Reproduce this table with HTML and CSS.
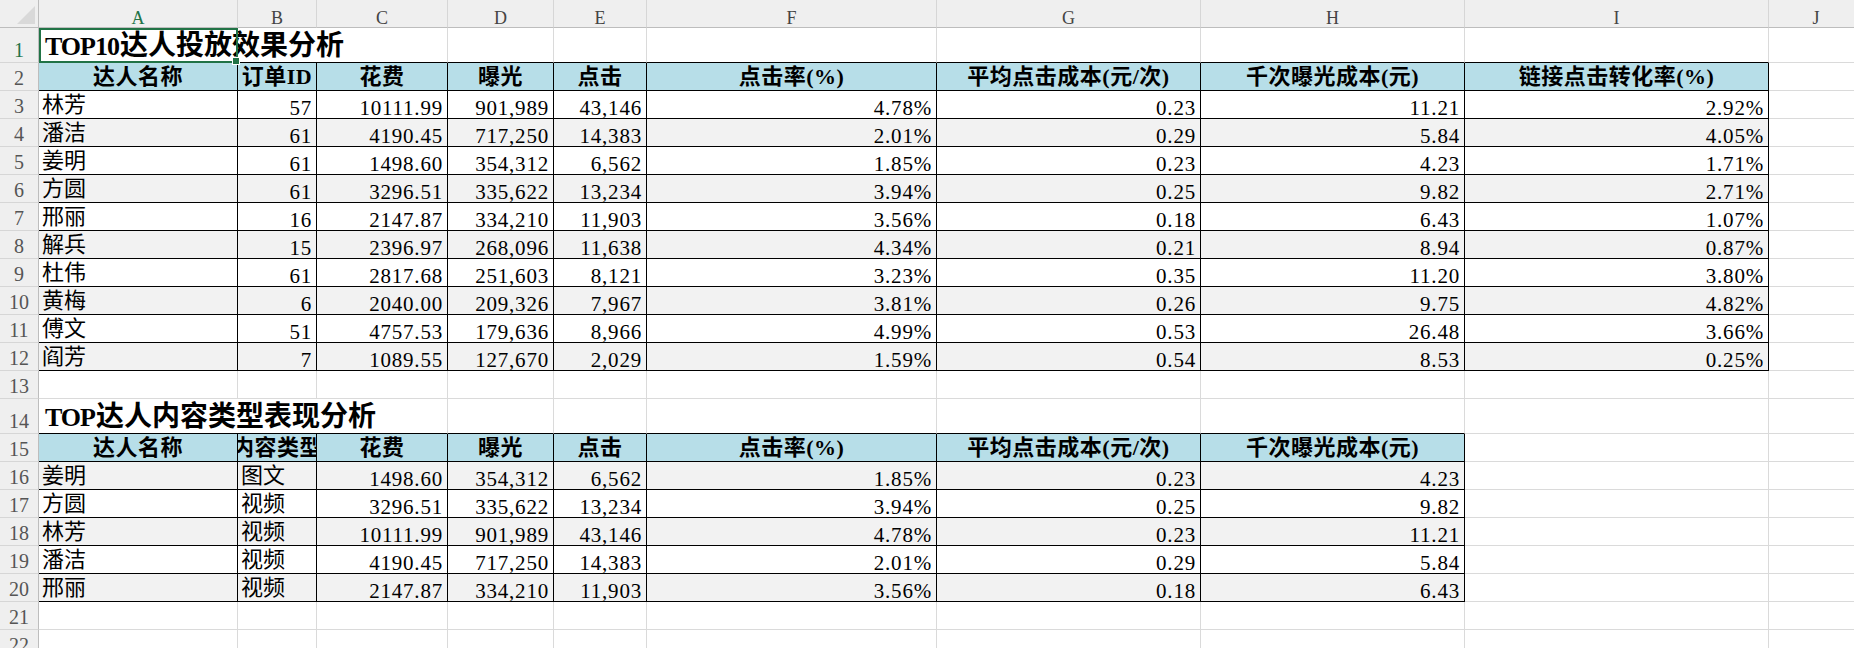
FILE: index.html
```html
<!DOCTYPE html>
<html lang="zh-CN">
<head>
<meta charset="utf-8">
<title>达人投放效果分析</title>
<link rel="stylesheet" href="styles.css">
</head>
<body>
<div class="sheet">
  <div class="row">
    <div class="ch corner"><svg width="38" height="27" viewBox="0 0 38 27"><polygon points="35,6 35,24 17,24" fill="#d9d9d9"/></svg></div>
    <div class="ch act">A</div>
    <div class="ch">B</div>
    <div class="ch">C</div>
    <div class="ch">D</div>
    <div class="ch">E</div>
    <div class="ch">F</div>
    <div class="ch">G</div>
    <div class="ch">H</div>
    <div class="ch">I</div>
    <div class="ch">J</div>
  </div>

  <div class="row">
    <div class="rh act">1</div>
    <div class="c ttl bb"><span class="tt"><span class="lat">TOP10</span>达人投放效果分析</span><div class="sel"></div></div>
    <div class="c bb"></div>
    <div class="c bb"></div>
    <div class="c bb"></div>
    <div class="c bb"></div>
    <div class="c bb"></div>
    <div class="c bb"></div>
    <div class="c"></div>
  </div>

  <div class="row tr hr">
    <div class="rh">2</div>
    <div class="c">达人名称</div>
    <div class="c">订单ID</div>
    <div class="c">花费</div>
    <div class="c">曝光</div>
    <div class="c">点击</div>
    <div class="c">点击率(%)</div>
    <div class="c">平均点击成本(元/次)</div>
    <div class="c">千次曝光成本(元)</div>
    <div class="c">链接点击转化率(%)</div>
    <div class="c x"></div>
  </div>

  <div class="row tr">
    <div class="rh">3</div>
    <div class="c">林芳</div>
    <div class="c n">57</div>
    <div class="c n">10111.99</div>
    <div class="c n">901,989</div>
    <div class="c n">43,146</div>
    <div class="c n">4.78%</div>
    <div class="c n">0.23</div>
    <div class="c n">11.21</div>
    <div class="c n">2.92%</div>
    <div class="c x"></div>
  </div>
  <div class="row tr z">
    <div class="rh">4</div>
    <div class="c">潘洁</div>
    <div class="c n">61</div>
    <div class="c n">4190.45</div>
    <div class="c n">717,250</div>
    <div class="c n">14,383</div>
    <div class="c n">2.01%</div>
    <div class="c n">0.29</div>
    <div class="c n">5.84</div>
    <div class="c n">4.05%</div>
    <div class="c x"></div>
  </div>
  <div class="row tr">
    <div class="rh">5</div>
    <div class="c">姜明</div>
    <div class="c n">61</div>
    <div class="c n">1498.60</div>
    <div class="c n">354,312</div>
    <div class="c n">6,562</div>
    <div class="c n">1.85%</div>
    <div class="c n">0.23</div>
    <div class="c n">4.23</div>
    <div class="c n">1.71%</div>
    <div class="c x"></div>
  </div>
  <div class="row tr z">
    <div class="rh">6</div>
    <div class="c">方圆</div>
    <div class="c n">61</div>
    <div class="c n">3296.51</div>
    <div class="c n">335,622</div>
    <div class="c n">13,234</div>
    <div class="c n">3.94%</div>
    <div class="c n">0.25</div>
    <div class="c n">9.82</div>
    <div class="c n">2.71%</div>
    <div class="c x"></div>
  </div>
  <div class="row tr">
    <div class="rh">7</div>
    <div class="c">邢丽</div>
    <div class="c n">16</div>
    <div class="c n">2147.87</div>
    <div class="c n">334,210</div>
    <div class="c n">11,903</div>
    <div class="c n">3.56%</div>
    <div class="c n">0.18</div>
    <div class="c n">6.43</div>
    <div class="c n">1.07%</div>
    <div class="c x"></div>
  </div>
  <div class="row tr z">
    <div class="rh">8</div>
    <div class="c">解兵</div>
    <div class="c n">15</div>
    <div class="c n">2396.97</div>
    <div class="c n">268,096</div>
    <div class="c n">11,638</div>
    <div class="c n">4.34%</div>
    <div class="c n">0.21</div>
    <div class="c n">8.94</div>
    <div class="c n">0.87%</div>
    <div class="c x"></div>
  </div>
  <div class="row tr">
    <div class="rh">9</div>
    <div class="c">杜伟</div>
    <div class="c n">61</div>
    <div class="c n">2817.68</div>
    <div class="c n">251,603</div>
    <div class="c n">8,121</div>
    <div class="c n">3.23%</div>
    <div class="c n">0.35</div>
    <div class="c n">11.20</div>
    <div class="c n">3.80%</div>
    <div class="c x"></div>
  </div>
  <div class="row tr z">
    <div class="rh">10</div>
    <div class="c">黄梅</div>
    <div class="c n">6</div>
    <div class="c n">2040.00</div>
    <div class="c n">209,326</div>
    <div class="c n">7,967</div>
    <div class="c n">3.81%</div>
    <div class="c n">0.26</div>
    <div class="c n">9.75</div>
    <div class="c n">4.82%</div>
    <div class="c x"></div>
  </div>
  <div class="row tr">
    <div class="rh">11</div>
    <div class="c">傅文</div>
    <div class="c n">51</div>
    <div class="c n">4757.53</div>
    <div class="c n">179,636</div>
    <div class="c n">8,966</div>
    <div class="c n">4.99%</div>
    <div class="c n">0.53</div>
    <div class="c n">26.48</div>
    <div class="c n">3.66%</div>
    <div class="c x"></div>
  </div>
  <div class="row tr z">
    <div class="rh">12</div>
    <div class="c">阎芳</div>
    <div class="c n">7</div>
    <div class="c n">1089.55</div>
    <div class="c n">127,670</div>
    <div class="c n">2,029</div>
    <div class="c n">1.59%</div>
    <div class="c n">0.54</div>
    <div class="c n">8.53</div>
    <div class="c n">0.25%</div>
    <div class="c x"></div>
  </div>

  <div class="row">
    <div class="rh">13</div>
    <div class="c"></div>
    <div class="c"></div>
    <div class="c"></div>
    <div class="c"></div>
    <div class="c"></div>
    <div class="c"></div>
    <div class="c"></div>
    <div class="c"></div>
    <div class="c"></div>
    <div class="c"></div>
  </div>

  <div class="row">
    <div class="rh">14</div>
    <div class="c ttl bb"><span class="tt"><span class="lat">TOP</span>达人内容类型表现分析</span></div>
    <div class="c bb"></div>
    <div class="c bb"></div>
    <div class="c bb"></div>
    <div class="c bb"></div>
    <div class="c bb"></div>
    <div class="c"></div>
    <div class="c"></div>
  </div>

  <div class="row tr hr">
    <div class="rh">15</div>
    <div class="c">达人名称</div>
    <div class="c">内容类型</div>
    <div class="c">花费</div>
    <div class="c">曝光</div>
    <div class="c">点击</div>
    <div class="c">点击率(%)</div>
    <div class="c">平均点击成本(元/次)</div>
    <div class="c">千次曝光成本(元)</div>
    <div class="c x"></div>
    <div class="c x"></div>
  </div>

  <div class="row tr z">
    <div class="rh">16</div>
    <div class="c">姜明</div>
    <div class="c">图文</div>
    <div class="c n">1498.60</div>
    <div class="c n">354,312</div>
    <div class="c n">6,562</div>
    <div class="c n">1.85%</div>
    <div class="c n">0.23</div>
    <div class="c n">4.23</div>
    <div class="c x"></div>
    <div class="c x"></div>
  </div>
  <div class="row tr">
    <div class="rh">17</div>
    <div class="c">方圆</div>
    <div class="c">视频</div>
    <div class="c n">3296.51</div>
    <div class="c n">335,622</div>
    <div class="c n">13,234</div>
    <div class="c n">3.94%</div>
    <div class="c n">0.25</div>
    <div class="c n">9.82</div>
    <div class="c x"></div>
    <div class="c x"></div>
  </div>
  <div class="row tr z">
    <div class="rh">18</div>
    <div class="c">林芳</div>
    <div class="c">视频</div>
    <div class="c n">10111.99</div>
    <div class="c n">901,989</div>
    <div class="c n">43,146</div>
    <div class="c n">4.78%</div>
    <div class="c n">0.23</div>
    <div class="c n">11.21</div>
    <div class="c x"></div>
    <div class="c x"></div>
  </div>
  <div class="row tr">
    <div class="rh">19</div>
    <div class="c">潘洁</div>
    <div class="c">视频</div>
    <div class="c n">4190.45</div>
    <div class="c n">717,250</div>
    <div class="c n">14,383</div>
    <div class="c n">2.01%</div>
    <div class="c n">0.29</div>
    <div class="c n">5.84</div>
    <div class="c x"></div>
    <div class="c x"></div>
  </div>
  <div class="row tr z">
    <div class="rh">20</div>
    <div class="c">邢丽</div>
    <div class="c">视频</div>
    <div class="c n">2147.87</div>
    <div class="c n">334,210</div>
    <div class="c n">11,903</div>
    <div class="c n">3.56%</div>
    <div class="c n">0.18</div>
    <div class="c n">6.43</div>
    <div class="c x"></div>
    <div class="c x"></div>
  </div>

  <div class="row">
    <div class="rh">21</div>
    <div class="c"></div>
    <div class="c"></div>
    <div class="c"></div>
    <div class="c"></div>
    <div class="c"></div>
    <div class="c"></div>
    <div class="c"></div>
    <div class="c"></div>
    <div class="c"></div>
    <div class="c"></div>
  </div>
  <div class="row">
    <div class="rh">22</div>
    <div class="c"></div>
    <div class="c"></div>
    <div class="c"></div>
    <div class="c"></div>
    <div class="c"></div>
    <div class="c"></div>
    <div class="c"></div>
    <div class="c"></div>
    <div class="c"></div>
    <div class="c"></div>
  </div>
</div>
</body>
</html>
```

FILE: styles.css
```css
html, body {
  margin: 0;
  padding: 0;
  background: #ffffff;
  overflow: hidden;
}

body {
  width: 1854px;
  height: 648px;
}

.sheet {
  display: grid;
  grid-template-columns: 39px 199px 79px 131px 106px 93px 290px 264px 264px 304px 95px;
  grid-template-rows: 28px 35px repeat(12, 28px) 35px repeat(8, 28px);
  width: 1864px;
  font-family: "Liberation Serif", "Noto Sans CJK SC", serif;
  font-size: 22px;
  color: #000;
}

.row {
  display: contents;
}

/* column headers */
.ch {
  box-sizing: border-box;
  background: #efefef;
  border-right: 1px solid #d6d6d6;
  border-bottom: 1px solid #bdbdbd;
  display: flex;
  align-items: flex-end;
  justify-content: center;
  font-size: 18px;
  line-height: 18px;
  color: #444;
}

.corner {
  align-items: stretch;
  border-right-color: #bdbdbd;
}

.corner svg {
  display: block;
}

/* row headers */
.rh {
  box-sizing: border-box;
  background: #efefef;
  border-right: 1px solid #bdbdbd;
  border-bottom: 1px solid #d6d6d6;
  display: flex;
  align-items: flex-end;
  justify-content: center;
  font-size: 20px;
  line-height: 23px;
  color: #555;
}

.act {
  color: #217346;
}

/* cells */
.c {
  box-sizing: border-box;
  min-width: 0;
  border-right: 1px solid #dadada;
  border-bottom: 1px solid #dadada;
  display: flex;
  align-items: flex-end;
  padding: 0 4px 0 3px;
  line-height: 26px;
  white-space: nowrap;
  overflow: hidden;
}

.n {
  justify-content: flex-end;
  font-size: 21px;
  line-height: 20px;
  letter-spacing: 0.8px;
}

.bb {
  border-bottom-color: #000;
}

.tr > .c:not(.x) {
  border-right-color: #000;
  border-bottom-color: #000;
}

.z > .c:not(.x) {
  background: #f2f2f2;
}

.hr > .c:not(.x) {
  background: #b7dee8;
  font-weight: bold;
  justify-content: center;
  padding: 0;
  letter-spacing: 0.5px;
}

/* titles */
.ttl {
  grid-column: span 3;
  position: relative;
  overflow: visible;
  padding-left: 6px;
  font-size: 28px;
  font-weight: bold;
  line-height: 30px;
  border-right-color: #dadada;
}

.lat {
  font-size: 26px;
  letter-spacing: -1px;
  margin-right: 1px;
}

/* active cell selection */
.sel {
  position: absolute;
  left: 0;
  top: 0;
  width: 199px;
  height: 35px;
  box-sizing: border-box;
  border: 2px solid #217346;
}

.sel::after {
  content: "";
  position: absolute;
  right: -4px;
  bottom: -4px;
  width: 6px;
  height: 6px;
  background: #217346;
  border: 1px solid #fff;
}
```
